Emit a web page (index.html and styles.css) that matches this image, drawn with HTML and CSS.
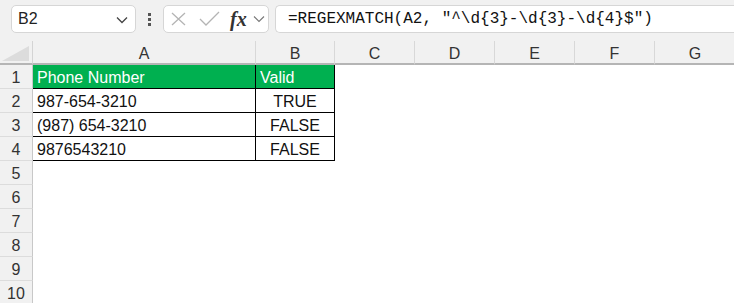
FILE: index.html
```html
<!DOCTYPE html>
<html lang="en">
<head>
  <meta charset="utf8"/>
  <title>REGEXMATCH phone numbers</title>
  <link rel="stylesheet" href="styles.css">
</head>
<body>
  <div class="toolbar">
    <div class="namebox">
      <span>B2</span>
      <svg class="chev" width="12" height="8" viewBox="0 0 12 8"><path d="M1 1.5 L6 6.5 L11 1.5" fill="none" stroke="#444" stroke-width="1.3"/></svg>
    </div>
    <div class="dots"><i></i><i></i><i></i></div>
    <div class="fnbox">
      <svg width="16" height="14" viewBox="0 0 16 14"><path d="M1 1 L14 13 M14 1 L1 13" stroke="#b4b4b4" stroke-width="1.3" fill="none"/></svg>
      <svg width="21" height="16" viewBox="0 0 21 16"><path d="M1 8 L7 14 L20 1" stroke="#b4b4b4" stroke-width="1.3" fill="none"/></svg>
      <span class="fx">fx</span>
      <svg width="12" height="8" viewBox="0 0 12 8"><path d="M1 1.5 L6 6.5 L11 1.5" fill="none" stroke="#777" stroke-width="1.1"/></svg>
    </div>
    <div class="formula">=REGEXMATCH(A2, "^\d{3}-\d{3}-\d{4}$")</div>
  </div>

  <div class="sheet">
    <div class="corner"><span class="tri"></span></div>
    <div class="colhead">A</div>
    <div class="colhead">B</div>
    <div class="colhead">C</div>
    <div class="colhead">D</div>
    <div class="colhead">E</div>
    <div class="colhead">F</div>
    <div class="colhead last">G</div>

    <div class="rowhead">1</div>
    <div class="cell head">Phone Number</div>
    <div class="cell head">Valid</div>
    <div class="empty span5"></div>

    <div class="rowhead">2</div>
    <div class="cell">987-654-3210</div>
    <div class="cell mid">TRUE</div>
    <div class="empty span5"></div>

    <div class="rowhead">3</div>
    <div class="cell">(987) 654-3210</div>
    <div class="cell mid">FALSE</div>
    <div class="empty span5"></div>

    <div class="rowhead">4</div>
    <div class="cell">9876543210</div>
    <div class="cell mid">FALSE</div>
    <div class="empty span5"></div>

    <div class="rowhead">5</div><div class="empty span7"></div>
    <div class="rowhead">6</div><div class="empty span7"></div>
    <div class="rowhead">7</div><div class="empty span7"></div>
    <div class="rowhead">8</div><div class="empty span7"></div>
    <div class="rowhead">9</div><div class="empty span7"></div>
    <div class="rowhead">10</div><div class="empty span7"></div>
  </div>
</body>
</html>
```

FILE: styles.css
```css
body { margin: 0; background: #fff; font-family: "Liberation Sans", Arial, sans-serif; color: #111; overflow: hidden; }

.toolbar { height: 41px; background: #f1f1f1; display: flex; align-items: flex-start; padding-top: 5px; box-sizing: border-box; }
.namebox { margin-left: 11px; width: 125px; height: 28px; box-sizing: border-box; background: #fff; border: 1px solid #d6d6d6; border-radius: 5px; display: flex; align-items: center; justify-content: space-between; padding: 0 7px 0 6px; font-size: 16px; color: #222; }
.namebox .chev { margin-top: 2px; }
.dots { width: 4px; margin: 8px 11px 0 12px; display: flex; flex-direction: column; gap: 2px; }
.dots i { display: block; width: 3px; height: 3px; background: #555; }
.fnbox { width: 106px; height: 28px; box-sizing: border-box; background: #fff; border: 1px solid #d6d6d6; border-radius: 5px; display: flex; align-items: center; padding: 0 2px 0 7px; }
.fnbox svg:nth-child(1) { margin-right: 12px; }
.fnbox svg:nth-child(2) { margin-right: 10px; }
.fx { font-family: "Liberation Serif", "DejaVu Serif", serif; font-style: italic; font-weight: bold; font-size: 20px; color: #333; margin-right: 6px; }
.formula { margin-left: 6px; flex: 1; height: 28px; box-sizing: border-box; background: #fff; border: 1px solid #d6d6d6; border-right: none; border-radius: 5px 0 0 5px; font-family: "Liberation Mono", monospace; font-size: 16px; color: #111; line-height: 26px; padding-left: 12px; white-space: nowrap; }

.sheet { display: grid; grid-template-columns: 33px 223px 79px repeat(5, 80px); grid-template-rows: 24px; grid-auto-rows: 24px; }
.corner { background: #f1f1f1; border-right: 1px solid #d4d4d4; border-bottom: 2px solid #b5b5b5; box-sizing: border-box; position: relative; }
.tri { position: absolute; right: 3px; bottom: 2px; width: 0; height: 0; border-left: 27px solid transparent; border-bottom: 15px solid #dcdcdc; }
.colhead { background: #f1f1f1; border-right: 1px solid #d8d8d8; border-bottom: 2px solid #b5b5b5; box-sizing: border-box; text-align: center; font-size: 16px; color: #333; line-height: 22px; padding-top: 2px; }
.colhead.last { border-right: none; }
.rowhead { background: #f1f1f1; border-right: 1px solid #c8c8c8; border-bottom: 1px solid #dcdcdc; box-sizing: border-box; text-align: center; font-size: 16px; color: #333; line-height: 22px; padding-top: 2px; }
.cell { box-sizing: border-box; border-right: 1px solid #000; border-bottom: 1px solid #000; font-size: 16px; line-height: 22px; padding: 2px 0 0 4px; white-space: nowrap; overflow: hidden; }
.cell.head { background: #00b050; color: #fff; }
.cell.mid { text-align: center; padding-left: 0; }
.empty.span5 { grid-column: span 5; }
.empty.span7 { grid-column: span 7; }
```
